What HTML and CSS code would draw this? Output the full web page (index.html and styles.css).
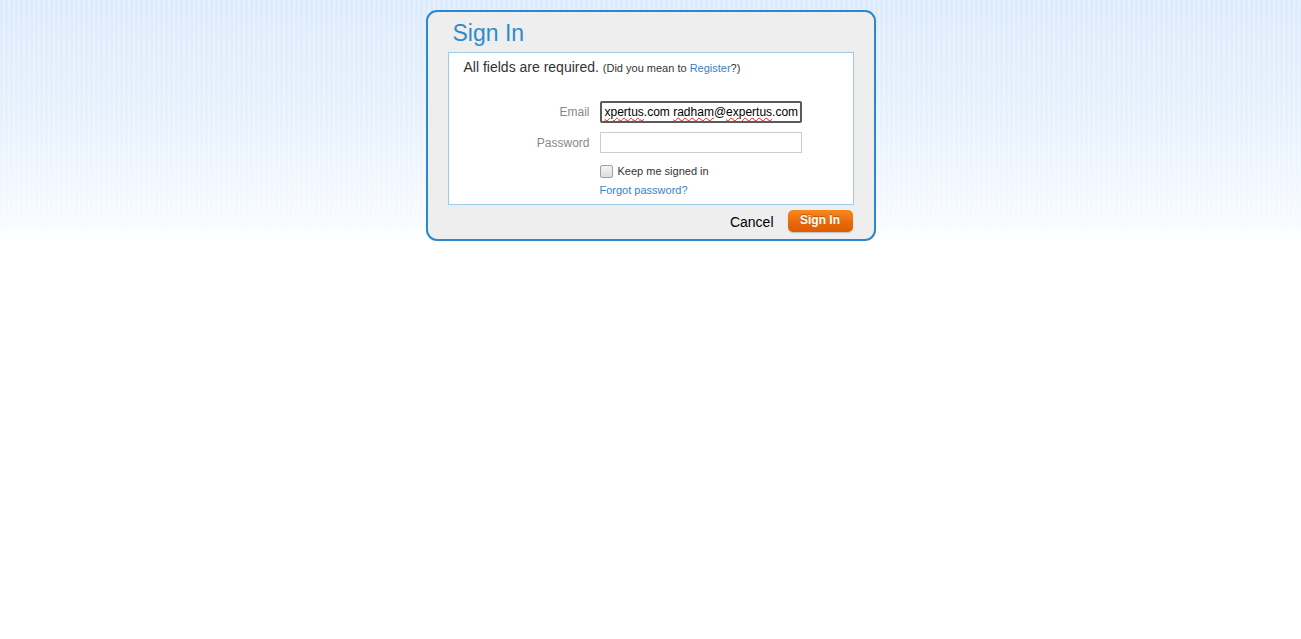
FILE: index.html
```html
<!DOCTYPE html>
<html>
<head>
<meta charset="utf-8">
<title>Sign In</title>
<link rel="stylesheet" href="styles.css">
</head>
<body>
<div class="dialog">
  <h1 class="title">Sign In</h1>
  <div class="panel">
    <p class="intro">All fields are required. <span class="small">(Did you mean to <a href="#" class="link">Register</a>?)</span></p>
    <div class="form">
      <label class="label">Email</label>
      <div class="field focused"><span class="value"><span class="sp">xpertus</span>.com <span class="sp">radham</span>@<span class="sp">expertus</span>.com</span><span class="caret"></span></div>
      <label class="label">Password</label>
      <div class="field"></div>
      <div class="spacer"></div>
      <div class="options">
        <label class="keep"><span class="check"></span>Keep me signed in</label>
        <a href="#" class="forgot">Forgot password?</a>
      </div>
    </div>
  </div>
  <div class="footer">
    <a href="#" class="cancel">Cancel</a>
    <button class="btn">Sign In</button>
  </div>
</div>
</body>
</html>
```
FILE: styles.css
```css
html, body {
  margin: 0;
  padding: 0;
}
body {
  min-height: 639px;
  font-family: "Liberation Sans", Arial, sans-serif;
  color: #333;
  background-color: #fff;
  background-image:
    repeating-linear-gradient(90deg, rgba(255,255,255,0) 0px, rgba(255,255,255,0) 3px, rgba(255,255,255,0.28) 3px, rgba(255,255,255,0.28) 5px),
    linear-gradient(to bottom, #dcebfc 0px, #e4f0fc 100px, #eff6fe 170px, #f8fbff 225px, #ffffff 242px);
  background-size: 100% 242px, 100% 242px;
  background-repeat: no-repeat;
}
.dialog {
  margin: 10px auto 0;
  border: 2px solid #2b88cc;
  border-radius: 11px;
  background: #eeeeee;
  padding: 0 20px 7px;
  box-sizing: content-box;
  width: 406px;
}
.title {
  margin: 0;
  padding: 8px 0 0 5px;
  height: 32px;
  font-weight: normal;
  font-size: 23px;
  line-height: 26px;
  color: #2e8bcb;
}
.panel {
  background: #fff;
  border: 1px solid #9ccbe8;
  height: 151px;
  padding: 0 15px;
}
.intro {
  margin: 0;
  padding-top: 6px;
  font-size: 14px;
  line-height: 16px;
  color: #333;
}
.small {
  font-size: 11px;
}
.link {
  color: #3b80c0;
  text-decoration: none;
}
.form {
  display: grid;
  grid-template-columns: 126px 202px;
  column-gap: 10px;
  row-gap: 9px;
  margin-top: 25px;
  align-items: center;
}
.label {
  text-align: right;
  font-size: 12px;
  color: #888;
}
.field {
  box-sizing: border-box;
  height: 21px;
  border: 1px solid #ccc;
  background: #fff;
  display: flex;
  align-items: center;
  overflow: hidden;
  white-space: nowrap;
}
.field.focused {
  border: 2px solid #5a5a5a;
  border-radius: 2px;
  padding-left: 3px;
  height: 22px;
}
.value {
  font-size: 12px;
  color: #000;
}
.sp {
  text-decoration: underline wavy #e02020;
  text-decoration-thickness: 1px;
  text-underline-offset: 1px;
}
.caret {
  width: 1px;
  height: 15px;
  background: #000;
  margin-left: 2px;
}
.options {
  display: flex;
  flex-direction: column;
  align-items: flex-start;
  gap: 6px;
  margin-top: 3px;
}
.keep {
  display: flex;
  align-items: center;
  font-size: 11px;
  color: #333;
  line-height: 13px;
}
.check {
  box-sizing: border-box;
  width: 13px;
  height: 13px;
  border: 1px solid #a0a0a0;
  border-radius: 2px;
  background: linear-gradient(#f4f4f4, #dcdcdc);
  margin-right: 5px;
}
.forgot {
  font-size: 11px;
  color: #3a82c2;
  text-decoration: none;
  line-height: 13px;
}
.footer {
  display: flex;
  justify-content: flex-end;
  align-items: center;
  gap: 14px;
  margin-top: 5px;
  height: 22px;
  padding-right: 1px;
}
.cancel {
  font-size: 14px;
  color: #000;
  text-decoration: none;
  margin-top: 2px;
}
.btn {
  width: 65px;
  height: 22px;
  border: none;
  border-radius: 5px;
  background: linear-gradient(#f7891e, #e8670a 60%, #db5e04);
  box-shadow: 0 1px 1px rgba(0,0,0,0.2);
  color: #fff;
  font-family: "Liberation Sans", Arial, sans-serif;
  font-weight: bold;
  font-size: 12px;
  text-shadow: 0 -1px 0 rgba(150,60,0,0.6);
  padding: 0 0 2px;
  cursor: pointer;
}
```
